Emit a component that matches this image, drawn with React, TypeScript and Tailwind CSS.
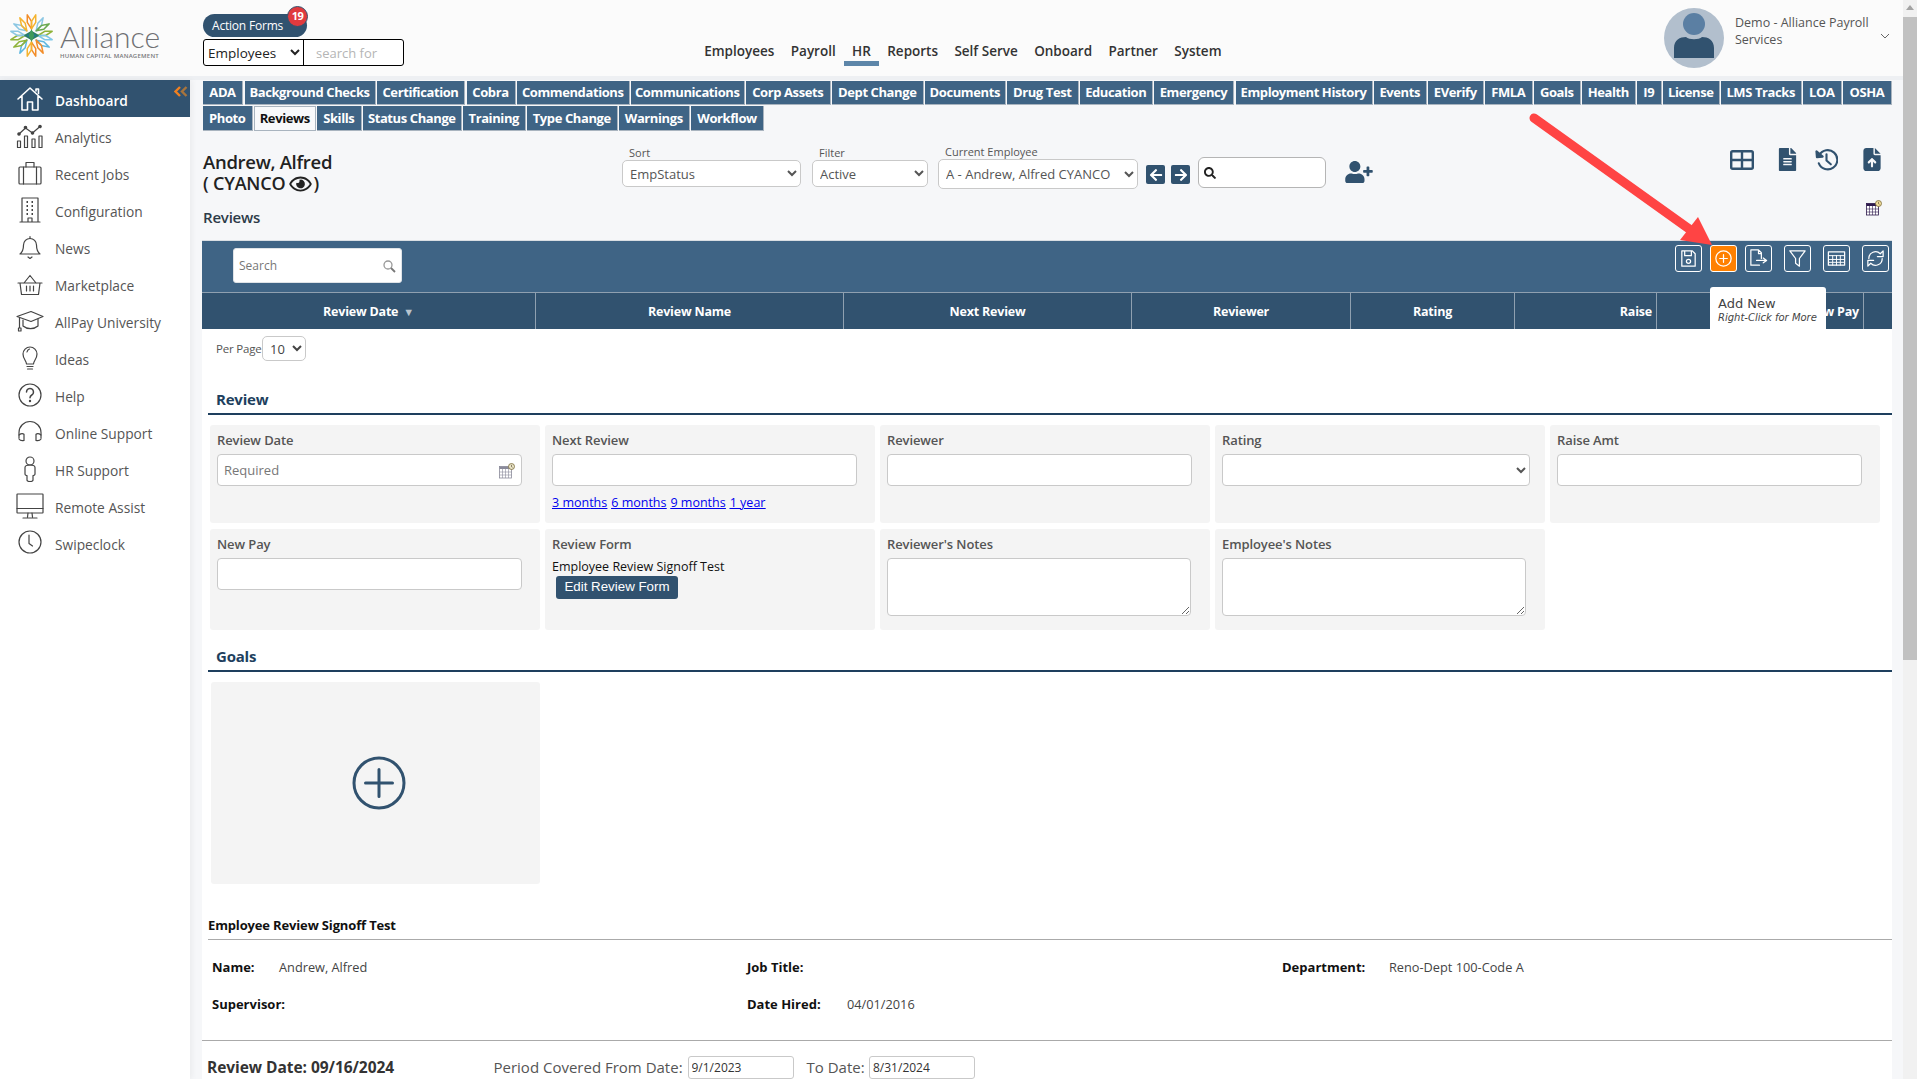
import { FaUserPlus, FaFileAlt, FaSearch, FaArrowLeft, FaArrowRight, FaRegEye } from 'react-icons/fa';
import { FaFileArrowUp } from 'react-icons/fa6';
import type { ReactNode } from 'react';

const tabsTop = [
  { label: 'ADA', w: 'w-[40px]' },
  { label: 'Background Checks', w: 'w-[131px]' },
  { label: 'Certification', w: 'w-[88px]' },
  { label: 'Cobra', w: 'w-[49px]' },
  { label: 'Commendations', w: 'w-[112.5px]' },
  { label: 'Communications', w: 'w-[113.5px]' },
  { label: 'Corp Assets', w: 'w-[84.5px]' },
  { label: 'Dept Change', w: 'w-[91.5px]' },
  { label: 'Documents', w: 'w-[80.5px]' },
  { label: 'Drug Test', w: 'w-[71.5px]' },
  { label: 'Education', w: 'w-[72.5px]' },
  { label: 'Emergency', w: 'w-[80px]' },
  { label: 'Employment History', w: 'w-[137px]' },
  { label: 'Events', w: 'w-[52.5px]' },
  { label: 'EVerify', w: 'w-[55.5px]' },
  { label: 'FMLA', w: 'w-[47.5px]' },
  { label: 'Goals', w: 'w-[46.5px]' },
  { label: 'Health', w: 'w-[53.5px]' },
  { label: 'I9', w: 'w-[24.5px]' },
  { label: 'License', w: 'w-[56.5px]' },
  { label: 'LMS Tracks', w: 'w-[80.5px]' },
  { label: 'LOA', w: 'w-[38.5px]' },
  { label: 'OSHA', w: 'w-[49px]' },
];

const tabsBottom = [
  { label: 'Photo', w: 'w-[49.5px]' },
  { label: 'Reviews', w: 'w-[61.5px]', active: true },
  { label: 'Skills', w: 'w-[44.5px]' },
  { label: 'Status Change', w: 'w-[98.5px]' },
  { label: 'Training', w: 'w-[62.5px]' },
  { label: 'Type Change', w: 'w-[90.5px]' },
  { label: 'Warnings', w: 'w-[70.5px]' },
  { label: 'Workflow', w: 'w-[73px]' },
];

const columns = [
  { label: 'Review Date', w: 'w-[334px]', align: 'justify-center', sort: true },
  { label: 'Review Name', w: 'w-[308px]', align: 'justify-center' },
  { label: 'Next Review', w: 'w-[288px]', align: 'justify-center' },
  { label: 'Reviewer', w: 'w-[219px]', align: 'justify-center' },
  { label: 'Rating', w: 'w-[164px]', align: 'justify-center' },
  { label: 'Raise', w: 'w-[142px]', align: 'justify-end pr-[4px]' },
  { label: 'New Pay', w: 'w-[207px]', align: 'justify-end pr-[4px]' },
  { label: '', w: 'w-[28px]', align: '' },
];

const navLinks = ['Employees', 'Payroll', 'HR', 'Reports', 'Self Serve', 'Onboard', 'Partner', 'System'];

function NavIcon({ children }: { children: ReactNode }) {
  return (
    <svg viewBox="0 0 28 28" className="h-[28px] w-[28px]" fill="none" stroke="currentColor" strokeWidth="1.2" strokeLinecap="round" strokeLinejoin="round">
      {children}
    </svg>
  );
}

const sideItems: { label: string; icon: ReactNode }[] = [
  {
    label: 'Analytics',
    icon: (
      <>
        <rect x="1.5" y="19" width="3" height="6.5" />
        <rect x="8.5" y="14" width="3" height="11.5" />
        <rect x="16" y="17" width="3" height="8.5" />
        <rect x="23" y="14" width="3" height="11.5" />
        <path d="M3 12 9.5 6l7 5 7.5-6.5" />
        <circle cx="3" cy="12" r="1.2" fill="currentColor" />
        <circle cx="9.5" cy="5.5" r="1.2" fill="currentColor" />
        <circle cx="16.5" cy="11" r="1.2" fill="currentColor" />
        <circle cx="24" cy="4.5" r="1.2" fill="currentColor" />
      </>
    ),
  },
  {
    label: 'Recent Jobs',
    icon: (
      <>
        <rect x="3" y="8" width="22" height="17" rx="1" />
        <path d="M7.5 8v17M20.5 8v17M10 8V3.5h8V8" />
      </>
    ),
  },
  {
    label: 'Configuration',
    icon: (
      <>
        <path d="M6 26V2h16v24M4 26h20M12 26v-4h4v4" />
        <path d="M10.5 6h1.5M15.5 6H17M10.5 10h1.5M15.5 10H17M10.5 14h1.5M15.5 14H17M10.5 18h1.5M15.5 18H17" strokeWidth="2" strokeLinecap="butt" />
      </>
    ),
  },
  {
    label: 'News',
    icon: (
      <>
        <path d="M4 21c2.500-2 3.500-4 3.500-9a6.500 6.500 0 0 1 13 0c0 5 1 7 3.500 9Z" />
        <path d="M14 5.500V3.500M12 24l2 1.500 2-1.500" />
      </>
    ),
  },
  {
    label: 'Marketplace',
    icon: (
      <>
        <path d="M2 13h24M4 13l1.500 11.500h17L24 13M8 13l6-7.500 6 7.500" />
        <path d="M10.500 16v5M14 16v5M17.500 16v5" />
      </>
    ),
  },
  {
    label: 'AllPay University',
    icon: (
      <>
        <path d="M1 9.500 15 4.500l12 5-12 5Z" />
        <path d="M7 13v6c4 3.500 11 3.500 15 0v-7" />
        <path d="M3.500 11v10M2.500 21h2.500v3h-2.500Z" />
      </>
    ),
  },
  {
    label: 'Ideas',
    icon: (
      <>
        <path d="M10.500 20c0-3-3.500-5-3.500-10a7 7 0 0 1 14 0c0 5-3.500 7-3.500 10Z" />
        <path d="M11 22.500h6M11.500 25h5M11 8c.3-1.500 1.200-2.500 2.500-3" />
      </>
    ),
  },
  {
    label: 'Help',
    icon: (
      <>
        <circle cx="14" cy="14" r="11" />
        <path d="M10.500 11a3.500 3.500 0 1 1 5.300 3c-1.200.7-1.800 1.400-1.800 2.800" strokeWidth="1.5" />
        <circle cx="14" cy="20" r=".6" fill="currentColor" />
      </>
    ),
  },
  {
    label: 'Online Support',
    icon: (
      <>
        <path d="M3 20v-5.500a11 11 0 0 1 22 0V20" />
        <path d="M3 17c2-1.500 4-1.500 5-.8v6.300c-2 .5-4 0-5-1.500M25 17c-2-1.500-4-1.500-5-.8v6.300c2 .5 4 0 5-1.500" />
      </>
    ),
  },
  {
    label: 'HR Support',
    icon: (
      <>
        <circle cx="14" cy="6" r="4" />
        <path d="M9 12.500c0-1.500 2-2.500 5-2.500s5 1 5 2.500V19c0 1-1.500 1.500-2 1.500V25c0 1-1 1.500-3 1.500s-3-.5-3-1.500v-4.500c-.5 0-2-.5-2-1.500Z" />
      </>
    ),
  },
  {
    label: 'Remote Assist',
    icon: (
      <>
        <rect x="1" y="2" width="26" height="19" rx=".5" />
        <path d="M1 16.500h26M12 21l-.5 4M16 21l.5 4M7 26h14" />
      </>
    ),
  },
  {
    label: 'Swipeclock',
    icon: (
      <>
        <circle cx="14" cy="13" r="11" />
        <path d="M13 6v8.500l3.500 2.500" />
      </>
    ),
  },
];

function LogoMark() {
  const petals = [
    { a: 0, left: '#f28c28', right: '#f5b32e' },
    { a: 45, left: '#8cc7e3', right: '#6aa84f' },
    { a: 90, left: '#8fb339', right: '#7fc8e8' },
    { a: 135, left: '#5db7e0', right: '#f28c28' },
    { a: 180, left: '#f28c28', right: '#f5b32e' },
    { a: 225, left: '#5db7e0', right: '#8fb339' },
    { a: 270, left: '#8fb339', right: '#8cc7e3' },
    { a: 315, left: '#8cc7e3', right: '#f5b32e' },
  ];
  return (
    <svg viewBox="-25 -25 50 50" className="h-[47px] w-[47px]" fill="none" strokeWidth="1.6" strokeLinejoin="round">
      {petals.map((p) => (
        <g key={p.a} transform={`rotate(${p.a})`}>
          <path d="M0 -7 L-4.500 -14 L-4.500 -22 L0 -15 Z" stroke={p.left} />
          <path d="M0 -7 L4.500 -14 L4.500 -22 L0 -15 Z" stroke={p.right} />
        </g>
      ))}
      <path d="M-7 0 0 -4 7 0 0 4Z" fill="#1f6fa8" stroke="#2a7f62" />
      <path d="M0 -7 3 0 0 7 -3 0Z" fill="#3f9a5a" stroke="none" />
    </svg>
  );
}

function CalendarClock({ faded = false }: { faded?: boolean }) {
  const line = faded ? '#8a8a9a' : '#2d1a4d';
  return (
    <svg viewBox="0 0 16 16" className="h-[16px] w-[16px]" fill="none">
      <rect x=".5" y="3.500" width="12" height="11.500" fill="#fff" stroke={line} strokeWidth=".8" />
      <rect x=".5" y="3.500" width="12" height="2.500" fill={line} />
      <path d="M.5 9h12M.5 12h12M3.500 6v9M6.500 6v9M9.500 6v9" stroke={line} strokeWidth=".6" />
      <circle cx="12.500" cy="3.500" r="3" fill={faded ? '#e9e4c8' : '#f0dc9a'} stroke="#7a6a3a" strokeWidth=".8" />
      <path d="M12.500 1.800v1.900l1 .6" stroke="#4a3a20" strokeWidth=".6" />
    </svg>
  );
}

function ToolButton({ active, children }: { active?: boolean; children: ReactNode }) {
  return (
    <button className={`flex h-[27px] w-[27px] items-center justify-center rounded-[3px] border border-white ${active ? 'bg-[#ff8000]' : 'bg-transparent'}`}>
      <svg viewBox="0 0 22 22" className="h-[21px] w-[21px]" fill="none" stroke="#fff" strokeWidth="1.3" strokeLinejoin="round" strokeLinecap="round">
        {children}
      </svg>
    </button>
  );
}

function Tab({ label, w, active }: { label: string; w: string; active?: boolean }) {
  return (
    <div
      className={`flex h-full shrink-0 items-center justify-center whitespace-nowrap border-r border-b border-[#a9b4bf] pt-[1px] text-[13px] font-bold tracking-[-0.4px] ${w} ${
        active ? 'border-t border-l bg-[#f8f9fb] text-[#111]' : 'bg-[#3f6485] text-white'
      }`}
    >
      {label}
    </div>
  );
}

function Field({ label, children }: { label: string; children: ReactNode }) {
  return (
    <div className="rounded-[3px] bg-[#f4f4f4] px-[7px] pt-[7px]">
      <div className="h-[16px] text-[13px] leading-[16px] font-semibold tracking-[-0.1px] text-[#555]">{label}</div>
      <div className="mt-[6px]">{children}</div>
    </div>
  );
}

const inputCls = 'block h-[32px] w-[305px] rounded-[4px] border border-[#c9c9c9] bg-white px-[6px] text-[13px] text-[#555] placeholder:text-[#777]';
const selectCls = 'rounded-[5px] border border-[#c9c9c9] bg-white px-[3px] text-[13px] text-[#555]';
const ruleHeading = 'ml-[6px] h-[25px] border-b-2 border-[#1e3f5e] pl-[8px] text-[15px] leading-[18px] font-bold tracking-[-0.2px] text-[#1e3f5e]';

export default function App() {
  return (
    <div className="relative flex h-[1079px] w-[1917px] overflow-hidden bg-[#f6f7f9] font-['Open_Sans',sans-serif] text-[#333]">
      <div className="flex w-[1903px] shrink-0 flex-col">
        {/* Header */}
        <header className="flex h-[80px] shrink-0 border-b-4 border-[#eef0f3] bg-[#fbfbfb]">
          <div className="flex w-[203px] shrink-0 pt-[12px] pl-[8px]">
            <LogoMark />
            <div className="ml-[5px] flex flex-col">
              <span className="mt-[7px] font-['Lato',sans-serif] text-[30px] leading-[34px] font-light text-[#6f7073]">Alliance</span>
              <span className="-mt-[1px] text-[6px] leading-[8px] font-semibold tracking-[0.25px] whitespace-nowrap text-[#77787a]">HUMAN CAPITAL MANAGEMENT</span>
            </div>
          </div>
          <div className="w-[201px] shrink-0 pt-[14px]">
            <div className="relative flex h-[23px] w-[104px] items-center rounded-full bg-[#31526f] pl-[9px] text-[12px] tracking-[-0.2px] text-white">
              Action Forms
              <span className="absolute -top-[8px] -right-[1px] flex h-[21px] w-[21px] items-center justify-center rounded-full border border-[#31526f] bg-[#e03a3e] text-[11px] font-bold tracking-[-0.5px]">19</span>
            </div>
            <div className="mt-[2px] flex h-[27px] w-[201px] rounded-[3px] border border-black bg-white">
              <select className="h-full w-[100px] border-r border-black text-[13.5px] text-[#222]" defaultValue="Employees">
                <option>Employees</option>
              </select>
              <input className="h-full min-w-0 flex-1 px-[12px] text-[13px] placeholder:text-[#b5b5b5]" placeholder="search for" />
            </div>
          </div>
          <nav className="mt-[42px] ml-[292px] flex h-[24px] shrink-0 items-start">
            {navLinks.map((n) => (
              <a key={n} className={`h-[24px] px-[8.2px] text-[13.5px] leading-[19px] font-semibold text-[#333] ${n === 'HR' ? 'border-b-[5px] border-[#5d86a9]' : ''}`}>
                {n}
              </a>
            ))}
          </nav>
          <div className="ml-auto flex pt-[8px] pr-[13px]">
            <svg viewBox="0 0 60 60" className="h-[60px] w-[60px]">
              <circle cx="30" cy="30" r="30" fill="#b2bfcd" />
              <circle cx="30" cy="16" r="11" fill="#5b7fa3" />
              <path d="M10 50V40c0-8 6-11 12-11 3 3 13 3 16 0 6 0 12 3 12 11v10Z" fill="#31526f" />
            </svg>
            <div className="ml-[11px] w-[142px] pt-[6px] text-[12.5px] leading-[17px] text-[#555]">Demo - Alliance Payroll Services</div>
            <svg viewBox="0 0 10 6" className="mt-[25px] ml-[3px] h-[6px] w-[10px]" fill="none" stroke="#666" strokeWidth="1">
              <path d="m1 1 4 4 4-4" />
            </svg>
          </div>
        </header>

        <div className="flex min-h-0 flex-1">
          {/* Sidebar */}
          <aside className="relative w-[190px] shrink-0 bg-white shadow-[2px_0_6px_rgba(0,0,0,0.05)]">
            <div className="flex h-[37px] items-center bg-[#31526f] pl-[16px] text-white">
              <svg viewBox="0 0 28 28" className="h-[28px] w-[28px]" fill="none" stroke="#fff" strokeWidth="1.6" strokeLinejoin="round" strokeLinecap="round">
                <path d="M2 14 14 3l12 11M20 6V4h2.500v4.500M6 11.500V25h5.500v-8h5v8H22V11.500" />
              </svg>
              <span className="ml-[11px] pt-[5px] text-[13.75px] font-semibold">Dashboard</span>
            </div>
            <svg viewBox="0 0 14 11" className="absolute top-[6px] right-[2px] h-[11px] w-[14px]" fill="none" strokeWidth="2.400">
              <path d="M6 1 1.500 5.500 6 10" stroke="#f08020" />
              <path d="M12.500 1 8 5.500 12.500 10" stroke="#a8743c" />
            </svg>
            {sideItems.map((item) => (
              <div key={item.label} className="flex h-[37px] items-center pl-[16px] text-[13.75px] text-[#555]">
                <span className="text-[#444]">
                  <NavIcon>{item.icon}</NavIcon>
                </span>
                <span className="ml-[11px] pt-[5px]">{item.label}</span>
              </div>
            ))}
          </aside>

          {/* Main */}
          <main className="relative flex min-w-0 flex-1 flex-col pt-[1px] pr-[11px] pl-[12px]">
            <div className="ml-[1px] flex h-[24px] gap-[1.5px]">
              {tabsTop.map((t) => (
                <Tab key={t.label} label={t.label} w={t.w} />
              ))}
            </div>
            <div className="mt-[1px] ml-[1px] flex h-[25px] gap-[1.5px]">
              {tabsBottom.map((t) => (
                <Tab key={t.label} label={t.label} w={t.w} active={t.active} />
              ))}
            </div>

            {/* Employee bar */}
            <div className="flex h-[109px] shrink-0 items-start">
              <div className="w-[420px] shrink-0 pt-[20px] pl-[1px]">
                <div className="text-[18.5px] leading-[21px] font-semibold tracking-[-0.3px] text-[#222]">Andrew, Alfred</div>
                <div className="mt-[1px] flex items-center text-[18px] leading-[21px] font-semibold tracking-[-0.2px] text-[#222]">
                  ( CYANCO <FaRegEye className="mr-[1px] ml-[4px] h-[20px] w-[23px]" />)
                </div>
                <div className="mt-[13px] text-[15px] leading-[20px] font-semibold tracking-[-0.2px] text-[#2d3b48]">Reviews</div>
              </div>
              <div className="w-[179px] shrink-0 pt-[15px]">
                <div className="mb-[1px] h-[13px] pl-[7px] text-[11px] leading-[13px] text-[#555]">Sort</div>
                <select className={`${selectCls} h-[27px] w-full`} defaultValue="EmpStatus">
                  <option>EmpStatus</option>
                </select>
              </div>
              <div className="ml-[11px] w-[116px] shrink-0 pt-[15px]">
                <div className="mb-[1px] h-[13px] pl-[7px] text-[11px] leading-[13px] text-[#555]">Filter</div>
                <select className={`${selectCls} h-[27px] w-full`} defaultValue="Active">
                  <option>Active</option>
                </select>
              </div>
              <div className="ml-[10px] w-[199.5px] shrink-0 pt-[14px]">
                <div className="mb-[1px] h-[13px] pl-[7px] text-[11px] leading-[13px] text-[#555]">Current Employee</div>
                <select className={`${selectCls} h-[30px] w-full`} defaultValue="A">
                  <option value="A">A - Andrew, Alfred CYANCO</option>
                </select>
              </div>
              <div className="ml-[8.5px] flex shrink-0 gap-[6px] pt-[34px]">
                <button className="flex h-[19px] w-[19px] items-center justify-center rounded-[2px] bg-[#31526f] text-white">
                  <FaArrowLeft className="h-[14px] w-[14px]" />
                </button>
                <button className="flex h-[19px] w-[19px] items-center justify-center rounded-[2px] bg-[#31526f] text-white">
                  <FaArrowRight className="h-[14px] w-[14px]" />
                </button>
              </div>
              <div className="mt-[26px] ml-[8px] flex h-[31px] w-[128px] shrink-0 items-center rounded-[6px] border border-[#b5b5b5] bg-white pl-[5px]">
                <FaSearch className="h-[12px] w-[12px] text-[#222]" />
              </div>
              <FaUserPlus className="mt-[30px] ml-[19px] h-[22px] w-[28px] shrink-0 text-[#31526f]" />
              <div className="ml-auto flex shrink-0 flex-col items-end pt-[17px]">
                <div className="flex items-center">
                  <svg viewBox="0 0 24 20" className="h-[20px] w-[24px]" fill="none" stroke="#31526f" strokeWidth="2.400">
                    <rect x="1.200" y="1.200" width="21.600" height="17.600" rx="1.500" />
                    <path d="M1 10h22M12 1v18" />
                  </svg>
                  <FaFileAlt className="ml-[24px] h-[23px] w-[19px] text-[#31526f]" />
                  <svg viewBox="0 0 24 24" className="ml-[18px] h-[23px] w-[23px]" fill="none" stroke="#31526f" strokeWidth="2.200" strokeLinecap="round" strokeLinejoin="round">
                    <path d="M4.500 7.500A10 10 0 1 1 4 16" />
                    <path d="M1.500 3.500 2 9.500l6-.5Z" fill="#31526f" />
                    <path d="M12 6.500V13l4.500 4" />
                  </svg>
                  <FaFileArrowUp className="ml-[25px] h-[23px] w-[18px] text-[#31526f]" />
                  <span className="w-[11px]" />
                </div>
                <div className="mt-[29px] mr-[10px]">
                  <CalendarClock />
                </div>
              </div>
            </div>

            {/* Grid toolbar */}
            <div className="relative shrink-0">
              <div className="flex h-[52px] items-start justify-between border-t border-[#d9dee3] bg-[#3f6485] pr-[3px] pl-[31px]">
                <div className="mt-[7px] flex h-[35px] w-[169px] items-center justify-between rounded-[3px] border border-[#dfe3e7] bg-white pr-[5px] pl-[5px] text-[12px] text-[#777]">
                  Search
                  <svg viewBox="0 0 14 14" className="h-[14px] w-[14px]" fill="none" stroke="#999" strokeWidth="1.300">
                    <circle cx="6" cy="6" r="4" />
                    <path d="m9 9 4 4" stroke="#777" strokeWidth="1.800" />
                  </svg>
                </div>
                <div className="mt-[4px] flex">
                  <ToolButton>
                    <path d="M4 3h11l3 3v13H4ZM7 3v5h7V3" />
                    <circle cx="11" cy="14" r="2.200" />
                  </ToolButton>
                  <span className="ml-[8px]">
                    <ToolButton active>
                      <circle cx="11" cy="11" r="8" />
                      <path d="M11 7v8M7 11h8" />
                    </ToolButton>
                  </span>
                  <span className="ml-[8px]">
                    <ToolButton>
                      <path d="M12 18H3V2h8l3 3v6M11 2v4h3M9 13h9M16 10.500 19.500 13 16 15.500" />
                    </ToolButton>
                  </span>
                  <span className="ml-[12px]">
                    <ToolButton>
                      <path d="M3 3h16l-6 8v8l-4-3v-5Z" />
                    </ToolButton>
                  </span>
                  <span className="ml-[12px]">
                    <ToolButton>
                      <rect x="2.500" y="4" width="17" height="14" />
                      <path d="M2.500 8h17M2.500 12h17M2.500 15h17M7 8v10M11 8v10M15 8v10" strokeWidth="1" />
                    </ToolButton>
                  </span>
                  <span className="ml-[12px]">
                    <ToolButton>
                      <path d="M4 11a7 7 0 0 1 12-5l3-3v6h-6M18 11a7 7 0 0 1-12 5l-3 3v-6h6" />
                    </ToolButton>
                  </span>
                </div>
              </div>
              <div className="flex h-[37px] border-t border-[#8fa0b0] bg-[#31526f] text-[12.5px] font-bold tracking-[-0.2px] text-white">
                {columns.map((c) => (
                  <div key={c.label || 'end'} className={`flex shrink-0 items-center border-r border-[#8fa0b0] pt-[2px] last:border-r-0 ${c.w} ${c.align}`}>
                    {c.label}
                    {c.sort && <span className="ml-[5px] text-[11px] text-[#b9c4ce]">▼</span>}
                  </div>
                ))}
              </div>
              {/* Tooltip */}
              <div className="absolute top-[47px] right-[66px] h-[42px] w-[116px] rounded-t-[3px] bg-white px-[8px] pt-[9px] font-['DejaVu_Sans',sans-serif] text-[#444]">
                <div className="text-[13px] leading-[16px]">Add New</div>
                <div className="text-[10px] leading-[12px] whitespace-nowrap italic">Right-Click for More</div>
              </div>
            </div>

            {/* Page body */}
            <div className="min-h-0 flex-1 overflow-hidden bg-white">
              <div className="mt-[7px] flex h-[25px] items-center pl-[14px]">
                <span className="w-[46px] text-[11.5px] tracking-[-0.2px] text-[#555]">Per Page</span>
                <select className="h-[25px] w-[44px] rounded-[5px] border border-[#c9c9c9] bg-white pl-[3px] text-[13px] text-[#444]" defaultValue="10">
                  <option>10</option>
                </select>
              </div>

              <h3 className={`mt-[29px] ${ruleHeading}`}>Review</h3>

              <div className="mt-[10px] ml-[8px] grid grid-cols-[repeat(5,329.5px)] grid-rows-[98px_101px] gap-x-[5.5px] gap-y-[6px]">
                <Field label="Review Date">
                  <div className={`${inputCls} flex items-center justify-between pt-[1px]`}>
                    <span className="text-[#777]">Required</span>
                    <CalendarClock faded />
                  </div>
                </Field>
                <Field label="Next Review">
                  <input className={inputCls} />
                  <div className="mt-[10px] flex h-[14px] gap-[4px] text-[12.5px] leading-[14px] text-[#0000ee] underline">
                    <a>3 months</a>
                    <a>6 months</a>
                    <a>9 months</a>
                    <a>1 year</a>
                  </div>
                </Field>
                <Field label="Reviewer">
                  <input className={inputCls} />
                </Field>
                <Field label="Rating">
                  <select className="block h-[32px] w-[308px] rounded-[4px] border border-[#c9c9c9] bg-white px-[6px] text-[13px] text-[#555]" />
                </Field>
                <Field label="Raise Amt">
                  <input className={inputCls} />
                </Field>
                <Field label="New Pay">
                  <input className={inputCls} />
                </Field>
                <div className="rounded-[3px] bg-[#f4f4f4] px-[7px] pt-[7px]">
                  <div className="h-[16px] text-[13px] leading-[16px] font-semibold tracking-[-0.1px] text-[#555]">Review Form</div>
                  <div className="mt-[8px] h-[13px] text-[12.5px] leading-[13px] text-[#111]">Employee Review Signoff Test</div>
                  <button className="ml-[4px] h-[23px] w-[122px] rounded-[3px] bg-[#31526f] font-['Liberation_Sans',sans-serif] text-[13.33px] text-white">Edit Review Form</button>
                </div>
                <Field label="Reviewer's Notes">
                  <textarea className="block h-[58px] w-[304px] rounded-[4px] border border-[#c9c9c9] bg-white" />
                </Field>
                <Field label="Employee's Notes">
                  <textarea className="block h-[58px] w-[304px] rounded-[4px] border border-[#c9c9c9] bg-white" />
                </Field>
              </div>

              <h3 className={`mt-[17px] ${ruleHeading}`}>Goals</h3>

              <div className="mt-[10px] ml-[8.5px] flex h-[202px] w-[329.5px] items-center justify-center rounded-[3px] bg-[#f4f4f4] pl-[8px]">
                <svg viewBox="0 0 54 54" className="h-[54px] w-[54px]" fill="none" stroke="#31526f" strokeWidth="3">
                  <circle cx="27" cy="27" r="25" />
                  <path d="M27 13.500v27M13.500 27h27" strokeLinecap="round" />
                </svg>
              </div>

              <div className="mt-[32px] ml-[6px] h-[24px] border-b border-[#aaa] text-[13px] leading-[18px] font-bold tracking-[-0.15px] text-[#111]">Employee Review Signoff Test</div>

              <div className="mt-[19px] ml-[10px] grid grid-cols-[535px_535px_1fr] text-[12.75px] leading-[16px] text-[#444]">
                <div className="flex">
                  <b className="w-[67px] text-[13px] text-[#111]">Name:</b>
                  <span>Andrew, Alfred</span>
                </div>
                <div className="flex">
                  <b className="text-[13px] text-[#111]">Job Title:</b>
                </div>
                <div className="flex">
                  <b className="w-[107px] text-[13px] text-[#111]">Department:</b>
                  <span>Reno-Dept 100-Code A</span>
                </div>
              </div>
              <div className="mt-[21px] ml-[10px] grid grid-cols-[535px_535px_1fr] text-[12.75px] leading-[16px] text-[#444]">
                <b className="text-[13px] text-[#111]">Supervisor:</b>
                <div className="flex">
                  <b className="w-[100px] text-[13px] text-[#111]">Date Hired:</b>
                  <span>04/01/2016</span>
                </div>
              </div>

              <div className="mt-[28px] border-t border-[#aaa]" />

              <div className="flex items-center pt-[15px] pl-[5px] text-[15px] leading-[23px]">
                <b className="w-[286.5px] text-[15.5px] font-bold tracking-[-0.05px] text-[#333]">Review Date: 09/16/2024</b>
                <span className="w-[194px] whitespace-nowrap text-[#555]">Period Covered From Date:</span>
                <input className="h-[23px] w-[106px] rounded-[3px] border border-[#c9c9c9] px-[3px] text-[12px]" defaultValue="9/1/2023" />
                <span className="ml-[13px] w-[62.500px] text-[#555]">To Date:</span>
                <input className="h-[23px] w-[106px] rounded-[3px] border border-[#c9c9c9] px-[3px] text-[12px]" defaultValue="8/31/2024" />
              </div>
            </div>
          </main>
        </div>
      </div>

      {/* Scrollbar */}
      <div className="flex w-[14px] shrink-0 flex-col items-center bg-[#f1f1f1]">
        <span className="mt-[5px] h-0 w-0 border-x-[4px] border-b-[5px] border-x-transparent border-b-[#a3a3a3]" />
        <div className="mt-[7px] h-[643px] w-full bg-[#c1c1c1]" />
      </div>

      {/* Annotation arrow */}
      <svg className="pointer-events-none absolute top-0 left-0 h-[1079px] w-[1917px]" viewBox="0 0 1917 1079" fill="#ff4444">
        <path d="M1534 118 1692 231" stroke="#ff4444" strokeWidth="9" strokeLinecap="round" />
        <path d="M1698 217 1680 240 1712 245Z" />
      </svg>
    </div>
  );
}
